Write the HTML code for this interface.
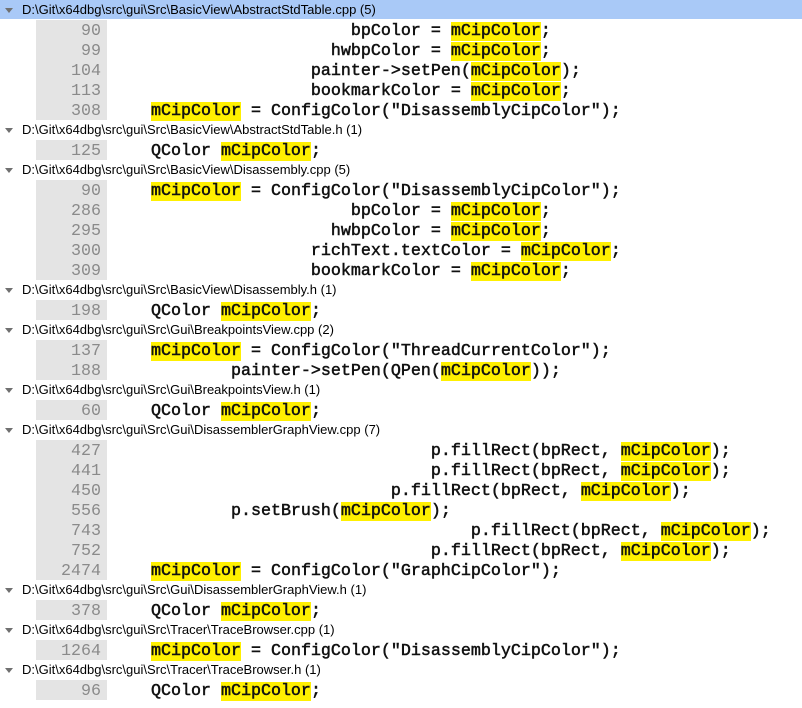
<!DOCTYPE html>
<html><head><meta charset="utf-8"><style>
body{margin:0;width:802px;height:708px;background:#fff;overflow:hidden;position:relative}
.r{position:absolute;left:0;width:802px;height:20px}
.h{font-family:"Liberation Sans",sans-serif;font-size:13px;color:#000;line-height:20px}
.h .t{position:absolute;left:5px;top:8px;width:0;height:0;border-left:4px solid transparent;border-right:4px solid transparent;border-top:5px solid #707070}
.h span.p{position:absolute;left:22px;top:0;white-space:pre}
.sel{background:#a9c9f7;height:19px}
.g{position:absolute;left:36px;width:71px;height:20px;background:#e4e4e4;font-family:"Liberation Mono",monospace;font-size:16.67px;color:#8a8a8a;text-align:right;line-height:20px;box-sizing:border-box;padding-right:6px;padding-top:2px}
.c{position:absolute;left:151px;top:0;font-family:"Liberation Mono",monospace;font-size:16.67px;line-height:20px;white-space:pre;color:#111;-webkit-text-stroke:0.5px #111}
.c b{background:#fff000;font-weight:normal;display:inline-block;height:18px;margin-top:1px;line-height:18px;padding-top:1px}
.c i{font-style:normal;display:inline-block;padding-top:2px}
</style></head><body>
<div class="r h sel" style="top:0"><div class="t"></div><span class="p">D:\Git\x64dbg\src\gui\Src\BasicView\AbstractStdTable.cpp (5)</span></div>
<div class="r" style="top:20px"><div class="g">90</div><div class="c"><i>                    bpColor = </i><b>mCipColor</b><i>;</i></div></div>
<div class="r" style="top:40px"><div class="g">99</div><div class="c"><i>                  hwbpColor = </i><b>mCipColor</b><i>;</i></div></div>
<div class="r" style="top:60px"><div class="g">104</div><div class="c"><i>                painter-&gt;setPen(</i><b>mCipColor</b><i>);</i></div></div>
<div class="r" style="top:80px"><div class="g">113</div><div class="c"><i>                bookmarkColor = </i><b>mCipColor</b><i>;</i></div></div>
<div class="r" style="top:100px"><div class="g">308</div><div class="c"><b>mCipColor</b><i> = ConfigColor("DisassemblyCipColor");</i></div></div>
<div class="r h" style="top:120px"><div class="t"></div><span class="p">D:\Git\x64dbg\src\gui\Src\BasicView\AbstractStdTable.h (1)</span></div>
<div class="r" style="top:140px"><div class="g">125</div><div class="c"><i>QColor </i><b>mCipColor</b><i>;</i></div></div>
<div class="r h" style="top:160px"><div class="t"></div><span class="p">D:\Git\x64dbg\src\gui\Src\BasicView\Disassembly.cpp (5)</span></div>
<div class="r" style="top:180px"><div class="g">90</div><div class="c"><b>mCipColor</b><i> = ConfigColor("DisassemblyCipColor");</i></div></div>
<div class="r" style="top:200px"><div class="g">286</div><div class="c"><i>                    bpColor = </i><b>mCipColor</b><i>;</i></div></div>
<div class="r" style="top:220px"><div class="g">295</div><div class="c"><i>                  hwbpColor = </i><b>mCipColor</b><i>;</i></div></div>
<div class="r" style="top:240px"><div class="g">300</div><div class="c"><i>                richText.textColor = </i><b>mCipColor</b><i>;</i></div></div>
<div class="r" style="top:260px"><div class="g">309</div><div class="c"><i>                bookmarkColor = </i><b>mCipColor</b><i>;</i></div></div>
<div class="r h" style="top:280px"><div class="t"></div><span class="p">D:\Git\x64dbg\src\gui\Src\BasicView\Disassembly.h (1)</span></div>
<div class="r" style="top:300px"><div class="g">198</div><div class="c"><i>QColor </i><b>mCipColor</b><i>;</i></div></div>
<div class="r h" style="top:320px"><div class="t"></div><span class="p">D:\Git\x64dbg\src\gui\Src\Gui\BreakpointsView.cpp (2)</span></div>
<div class="r" style="top:340px"><div class="g">137</div><div class="c"><b>mCipColor</b><i> = ConfigColor("ThreadCurrentColor");</i></div></div>
<div class="r" style="top:360px"><div class="g">188</div><div class="c"><i>        painter-&gt;setPen(QPen(</i><b>mCipColor</b><i>));</i></div></div>
<div class="r h" style="top:380px"><div class="t"></div><span class="p">D:\Git\x64dbg\src\gui\Src\Gui\BreakpointsView.h (1)</span></div>
<div class="r" style="top:400px"><div class="g">60</div><div class="c"><i>QColor </i><b>mCipColor</b><i>;</i></div></div>
<div class="r h" style="top:420px"><div class="t"></div><span class="p">D:\Git\x64dbg\src\gui\Src\Gui\DisassemblerGraphView.cpp (7)</span></div>
<div class="r" style="top:440px"><div class="g">427</div><div class="c"><i>                            p.fillRect(bpRect, </i><b>mCipColor</b><i>);</i></div></div>
<div class="r" style="top:460px"><div class="g">441</div><div class="c"><i>                            p.fillRect(bpRect, </i><b>mCipColor</b><i>);</i></div></div>
<div class="r" style="top:480px"><div class="g">450</div><div class="c"><i>                        p.fillRect(bpRect, </i><b>mCipColor</b><i>);</i></div></div>
<div class="r" style="top:500px"><div class="g">556</div><div class="c"><i>        p.setBrush(</i><b>mCipColor</b><i>);</i></div></div>
<div class="r" style="top:520px"><div class="g">743</div><div class="c"><i>                                p.fillRect(bpRect, </i><b>mCipColor</b><i>);</i></div></div>
<div class="r" style="top:540px"><div class="g">752</div><div class="c"><i>                            p.fillRect(bpRect, </i><b>mCipColor</b><i>);</i></div></div>
<div class="r" style="top:560px"><div class="g">2474</div><div class="c"><b>mCipColor</b><i> = ConfigColor("GraphCipColor");</i></div></div>
<div class="r h" style="top:580px"><div class="t"></div><span class="p">D:\Git\x64dbg\src\gui\Src\Gui\DisassemblerGraphView.h (1)</span></div>
<div class="r" style="top:600px"><div class="g">378</div><div class="c"><i>QColor </i><b>mCipColor</b><i>;</i></div></div>
<div class="r h" style="top:620px"><div class="t"></div><span class="p">D:\Git\x64dbg\src\gui\Src\Tracer\TraceBrowser.cpp (1)</span></div>
<div class="r" style="top:640px"><div class="g">1264</div><div class="c"><b>mCipColor</b><i> = ConfigColor("DisassemblyCipColor");</i></div></div>
<div class="r h" style="top:660px"><div class="t"></div><span class="p">D:\Git\x64dbg\src\gui\Src\Tracer\TraceBrowser.h (1)</span></div>
<div class="r" style="top:680px"><div class="g">96</div><div class="c"><i>QColor </i><b>mCipColor</b><i>;</i></div></div>
</body></html>
